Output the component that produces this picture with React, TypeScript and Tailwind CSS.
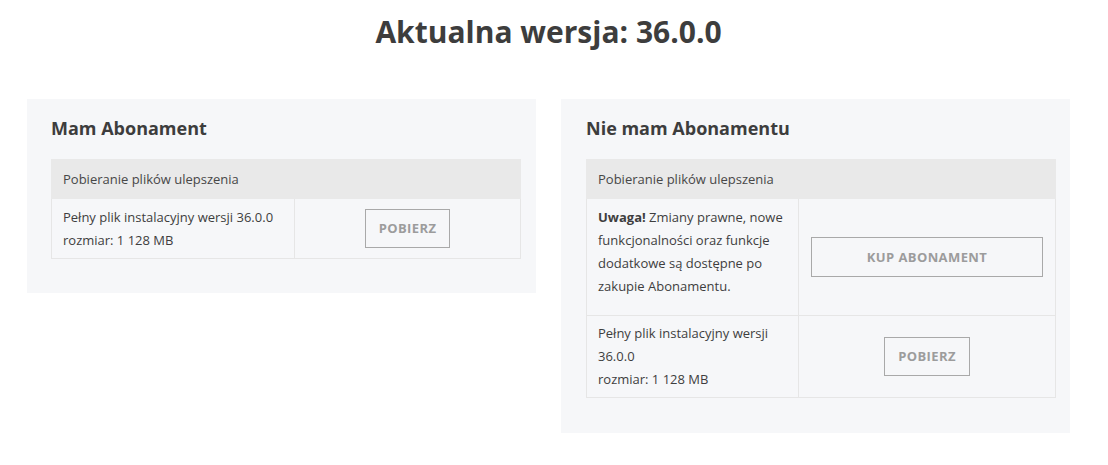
import React from "react";

function Btn({ children, wide }: { children: React.ReactNode; wide?: boolean }) {
  return (
    <button
      className={
        wide
          ? "w-full h-[40px] border border-[#a9a9a9] bg-transparent text-[#9c9c9c] font-bold text-[13px] leading-[23px] tracking-[0.4px]"
          : "h-[39px] px-[13px] border border-[#a9a9a9] bg-transparent text-[#9c9c9c] font-bold text-[13px] leading-[23px] tracking-[0.4px]"
      }
    >
      {children}
    </button>
  );
}

export default function App() {
  return (
    <div className="w-[1108px] h-[465px] bg-white font-['Open_Sans',sans-serif] text-[#3e3e3e]">
      <div className="ml-[27px] w-[1043px] pt-[12px]">
        <h1 className="text-center text-[30px] leading-[40px] font-bold text-[#3d3d3d]">
          Aktualna wersja: 36.0.0
        </h1>
        <div className="mt-[47px] flex items-start gap-[25px]">
          {/* Left panel */}
          <div className="w-[509px] bg-[#f6f7f9] pt-[17px] pl-[24px] pr-[15px] pb-[34px]">
            <h2 className="text-[18px] leading-[24px] font-bold text-[#3d3d3d]">Mam Abonament</h2>
            <div className="mt-[19px] w-[470px] text-[13px] leading-[23px]">
              <div className="h-[40px] bg-[#e9e9e9] flex items-center px-3 text-[#474747]">
                Pobieranie plików ulepszenia
              </div>
              <div className="grid grid-cols-[243px_1fr] border-x border-b border-[#e6e6e6]">
                <div className="border-r border-[#e6e6e6] pl-[11px] pr-2 pt-[7px] pb-[6px]">
                  <div>Pełny plik instalacyjny wersji 36.0.0</div>
                  <div>rozmiar: 1 128 MB</div>
                </div>
                <div className="flex items-center justify-center">
                  <Btn>POBIERZ</Btn>
                </div>
              </div>
            </div>
          </div>

          {/* Right panel */}
          <div className="w-[509px] bg-[#f6f7f9] pt-[17px] pl-[25px] pr-[14px] pb-[35px]">
            <h2 className="text-[18px] leading-[24px] font-bold text-[#3d3d3d]">Nie mam Abonamentu</h2>
            <div className="mt-[19px] w-[470px] text-[13px] leading-[23px]">
              <div className="h-[40px] bg-[#e9e9e9] flex items-center px-3 text-[#474747]">
                Pobieranie plików ulepszenia
              </div>
              <div className="grid grid-cols-[212px_1fr] border-x border-b border-[#e6e6e6]">
                <div className="border-r border-[#e6e6e6] pl-[11px] pr-2 pt-[7px] pb-[7px]">
                  <p className="mb-[10px]">
                    <span className="font-bold">Uwaga!</span> Zmiany prawne, nowe funkcjonalności oraz funkcje
                    dodatkowe są dostępne po zakupie Abonamentu.
                  </p>
                </div>
                <div className="flex items-center pl-[12px] pr-[12px]">
                  <Btn wide>KUP ABONAMENT</Btn>
                </div>
              </div>
              <div className="grid grid-cols-[212px_1fr] border-x border-b border-[#e6e6e6]">
                <div className="border-r border-[#e6e6e6] pl-[11px] pr-2 pt-[6px] pb-[6px]">
                  <div>Pełny plik instalacyjny wersji 36.0.0</div>
                  <div>rozmiar: 1 128 MB</div>
                </div>
                <div className="flex items-center justify-center">
                  <Btn>POBIERZ</Btn>
                </div>
              </div>
            </div>
          </div>
        </div>
      </div>
    </div>
  );
}
